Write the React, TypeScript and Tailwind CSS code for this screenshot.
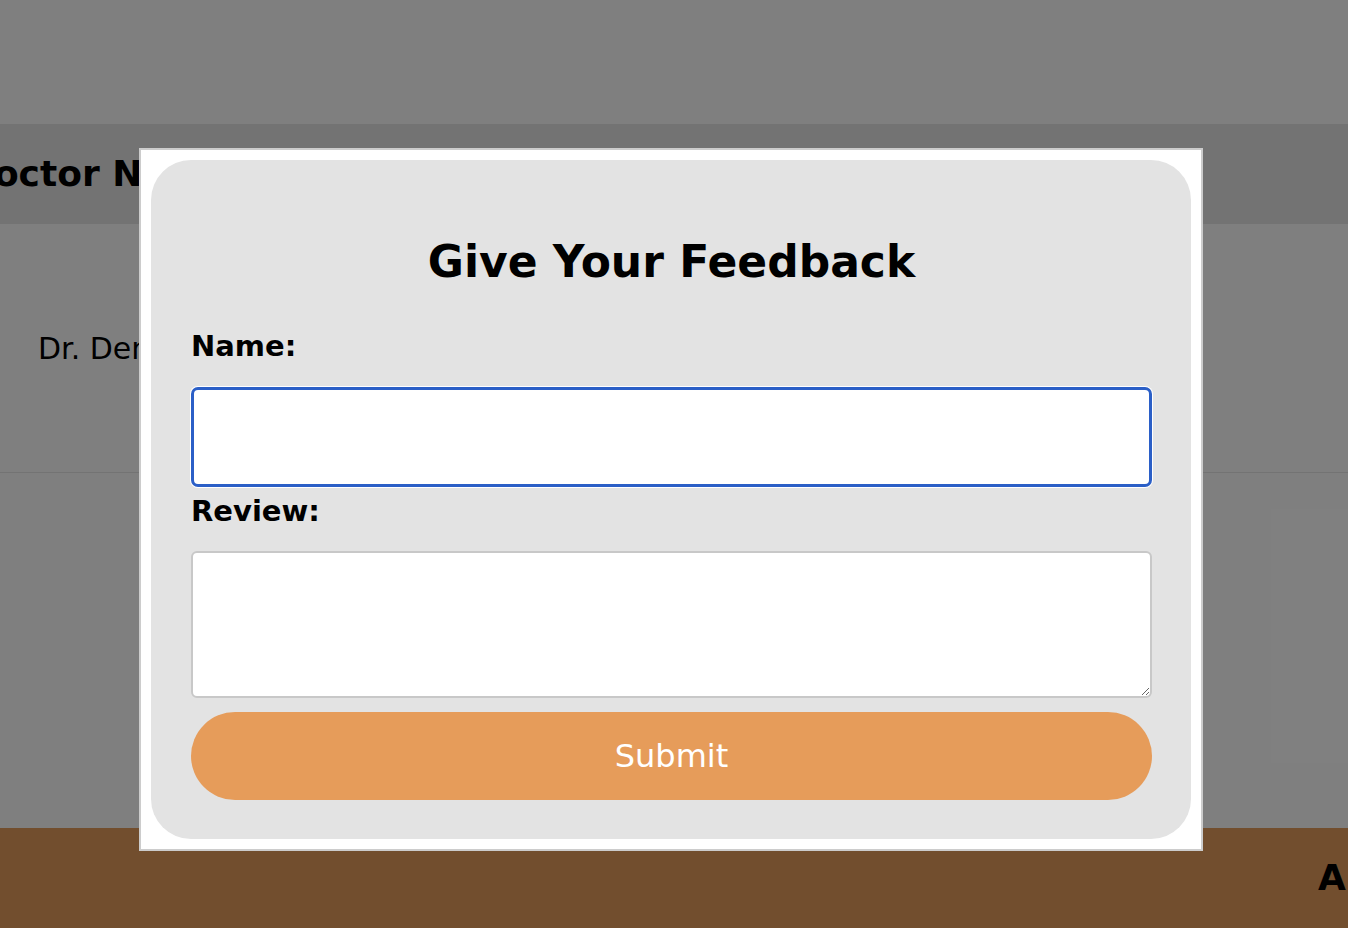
import React from "react";

const FeedbackPage: React.FC = () => {
  return (
    <div className="relative flex h-[928px] w-full flex-col overflow-hidden bg-white font-['DejaVu_Sans',sans-serif] text-black">
      <div className="h-[124px] shrink-0" />
      <div className="flex h-[100px] shrink-0 items-center bg-[#e6e6e6]">
        <span className="ml-[-36px] whitespace-nowrap text-[36px] font-bold">Doctor Name</span>
      </div>
      <div className="flex h-[249px] shrink-0 items-center border-b border-[#e6e6e6] pl-[38px]">
        <span className="whitespace-nowrap text-[30px]">Dr. Dennis Moore</span>
      </div>
      <div className="flex-1" />
      <div className="flex h-[100px] shrink-0 items-center overflow-hidden bg-[#e49c5c] pl-[1318px]">
        <span className="shrink-0 whitespace-nowrap text-[36px] font-bold">Appointments</span>
      </div>

      {/* backdrop + dialog */}
      <div className="absolute inset-0 bg-black/50" />
      <div className="absolute left-[139px] top-[148px] h-[703px] w-[1064px] border-2 border-[#cccccc] bg-white p-[10px]">
        <form className="flex h-full flex-col rounded-[40px] bg-[#e3e3e3] pl-[40px] pr-[39px] pt-[80px]">
          <h2 className="h-[44px] text-center text-[44px] font-bold leading-[44px]">Give Your Feedback</h2>
          <label className="mt-[48px] h-[29px] text-[29px] font-bold leading-[29px]">Name:</label>
          <input
            type="text"
            className="mt-[26px] block h-[100px] w-full rounded-[7px] border-[3px] border-[#2b5fc7] bg-white shadow-[0_0_0_1px_#ffffff] outline-none"
          />
          <label className="mt-[10px] h-[29px] text-[29px] font-bold leading-[29px]">Review:</label>
          <textarea className="mt-[25px] block h-[147px] w-full rounded-[6px] border-2 border-[#c8c8c8] bg-white outline-none" />
          <button
            type="button"
            className="mt-[14px] flex h-[88px] w-full items-center justify-center rounded-full bg-[#e69c5a] text-[32px] text-white"
          >
            Submit
          </button>
        </form>
      </div>
    </div>
  );
};

export default function App() {
  return <FeedbackPage />;
}
